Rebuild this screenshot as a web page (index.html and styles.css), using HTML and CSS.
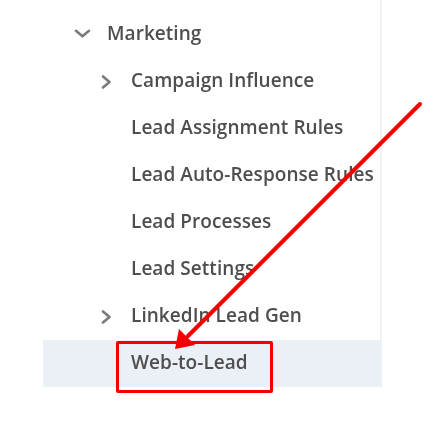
FILE: index.html
```html
<!DOCTYPE html>
<html>
<head>
<meta charset="utf-8">
<link rel="stylesheet" href="styles.css">
</head>
<body>
<div class="page">
  <div class="tree">
    <div class="row level1">
      <span class="chev"><svg width="17" height="9" viewBox="0 0 17 9"><polyline points="2,1.8 8.5,7.2 15,1.8" fill="none" stroke="#7a7a7a" stroke-width="2.6" stroke-linecap="round" stroke-linejoin="round"/></svg></span>
      <span class="label">Marketing</span>
    </div>
    <div class="row level2">
      <span class="chev"><svg width="11" height="16" viewBox="0 0 11 16"><polyline points="2,2.5 8.5,8 2,13.5" fill="none" stroke="#7a7a7a" stroke-width="2.6" stroke-linecap="round" stroke-linejoin="round"/></svg></span>
      <span class="label">Campaign Influence</span>
    </div>
    <div class="row level2"><span class="chev"></span><span class="label">Lead Assignment Rules</span></div>
    <div class="row level2"><span class="chev"></span><span class="label">Lead Auto-Response Rules</span></div>
    <div class="row level2"><span class="chev"></span><span class="label">Lead Processes</span></div>
    <div class="row level2"><span class="chev"></span><span class="label">Lead Settings</span></div>
    <div class="row level2">
      <span class="chev"><svg width="11" height="16" viewBox="0 0 11 16"><polyline points="2,2.5 8.5,8 2,13.5" fill="none" stroke="#7a7a7a" stroke-width="2.6" stroke-linecap="round" stroke-linejoin="round"/></svg></span>
      <span class="label">LinkedIn Lead Gen</span>
    </div>
    <div class="row level2 selected"><span class="chev"></span><span class="label">Web-to-Lead</span></div>
  </div>
  <div class="callout"></div>
  <svg class="arrow" width="443" height="421" viewBox="0 0 443 421">
    <line x1="420" y1="104" x2="188" y2="336" stroke="#f50000" stroke-width="4" stroke-linecap="round"/>
    <polygon points="175,349 179,329 195,345" fill="#f50000"/>
  </svg>
</div>
</body>
</html>
```

FILE: styles.css
```css
html, body {
  margin: 0;
  padding: 0;
  background: #ffffff;
}
.page {
  position: relative;
  width: 443px;
  height: 421px;
  overflow: hidden;
}
.tree {
  margin-left: 43px;
  width: 337px;
  padding-top: 11px;
  border-right: 2px solid #f2f2f2;
  font-family: "Open Sans", "Liberation Sans", sans-serif;
  font-size: 19px;
  font-weight: 600;
  color: #4e4e4e;
}
.row {
  display: flex;
  align-items: center;
  height: 44px;
  padding-bottom: 3px;
  white-space: nowrap;
}
.label {
  filter: blur(0.4px);
  letter-spacing: 0.05px;
}
.level1 {
  padding-left: 31px;
}
.level1 .chev {
  width: 33px;
}
.level2 {
  padding-left: 58px;
}
.level2 .chev {
  width: 30px;
  padding-top: 3px;
}
.chev {
  display: flex;
  align-items: center;
  flex: none;
  filter: blur(0.3px);
}
.selected {
  background: #eaf0f5;
  margin-right: -2px;
}
.callout {
  position: absolute;
  left: 116px;
  top: 341px;
  width: 157px;
  height: 52px;
  box-sizing: border-box;
  border: 3px solid #f50000;
  border-radius: 2px;
}
.arrow {
  position: absolute;
  left: 0;
  top: 0;
}
```
